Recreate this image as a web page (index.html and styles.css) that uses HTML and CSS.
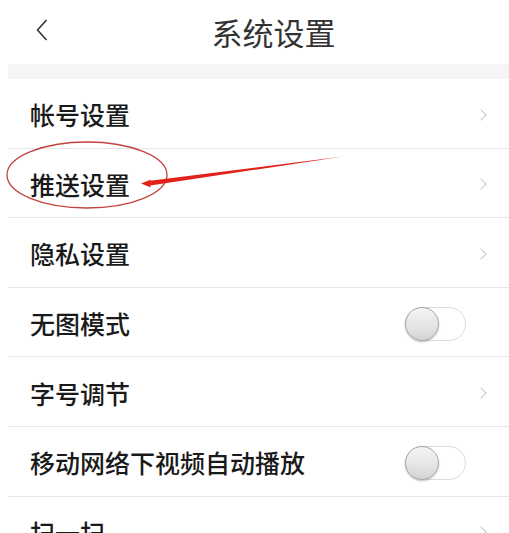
FILE: index.html
```html
<!DOCTYPE html>
<html lang="zh">
<head>
<meta charset="utf-8">
<link rel="stylesheet" href="styles.css">
</head>
<body>
<div class="page">
  <header class="topbar">
    <span class="back">
      <svg width="12" height="22" viewBox="0 0 12 22"><path d="M10.5 1 L1.5 11 L10.5 21" fill="none" stroke="#333" stroke-width="1.6" stroke-linejoin="round"/></svg>
    </span>
    <h1 class="title">系统设置</h1>
  </header>
  <div class="band"></div>
  <ul class="list">
    <li class="row"><span class="label">帐号设置</span><span class="chev"></span></li>
    <li class="row"><span class="label">推送设置</span><span class="chev"></span></li>
    <li class="row"><span class="label">隐私设置</span><span class="chev"></span></li>
    <li class="row"><span class="label">无图模式</span><span class="switch"><span class="knob"></span></span></li>
    <li class="row"><span class="label">字号调节</span><span class="chev"></span></li>
    <li class="row"><span class="label">移动网络下视频自动播放</span><span class="switch"><span class="knob"></span></span></li>
    <li class="row"><span class="label">扫一扫</span><span class="chev"></span></li>
  </ul>
  <svg class="annot" width="509" height="533" viewBox="0 0 509 533">
    <ellipse cx="87" cy="175" rx="80" ry="33" fill="none" stroke="#c4423c" stroke-width="1.3"/>
    <path d="M343 156.5 L148 181 L147 186 Z" fill="#e3211b"/>
    <path d="M141 183.5 L151 179.5 L149 183 L151 187.5 Z" fill="#e3211b"/>
  </svg>
</div>
</body>
</html>
```
FILE: styles.css
```css
* { box-sizing: border-box; }
html, body { margin: 0; padding: 0; background: #fff; }
body {
  font-family: "Noto Sans CJK SC", "Noto Sans", sans-serif;
  color: #222;
}
.page {
  position: relative;
  width: 509px;
  height: 533px;
  overflow: hidden;
  background: #fff;
}
.topbar {
  height: 64px;
  display: flex;
  align-items: center;
  justify-content: center;
  position: relative;
}
.back {
  position: absolute;
  left: 36px;
  top: 19px;
  display: flex;
}
.title {
  margin: 0 0 0 38px;
  font-size: 31px;
  font-weight: 400;
  color: #333;
  line-height: 1;
  padding-bottom: 2px;
}
.band {
  margin-left: 8px;
  height: 15px;
  background: #f5f5f5;
}
.list {
  list-style: none;
  margin: 0 0 0 8px;
  padding: 0;
}
.row {
  height: 69.6px;
  border-bottom: 1px solid #e6e6e6;
  display: flex;
  align-items: center;
  justify-content: space-between;
  padding: 3px 22px 0 22px;
}
.label {
  font-size: 25px;
  line-height: 1;
  font-weight: 500;
  color: #1a1a1a;
}
.chev {
  width: 8px;
  height: 8px;
  border-top: 1.2px solid #c9c9c9;
  border-right: 1.2px solid #c9c9c9;
  transform: rotate(45deg);
  margin-right: 2px;
}
.switch {
  width: 61px;
  height: 34px;
  border: 1px solid #dcdcdc;
  border-radius: 17px;
  margin-right: 21px;
  position: relative;
  background: #fff;
  display: flex;
  align-items: center;
}
.knob {
  width: 34px;
  height: 34px;
  margin-left: -1px;
  border-radius: 50%;
  border: 1px solid #a8a8a8;
  background: linear-gradient(180deg, #f4f4f4 0%, #e4e4e4 60%, #d2d2d2 100%);
  box-shadow: 0 1px 2px rgba(0,0,0,0.25);
}
.annot {
  position: absolute;
  left: 0;
  top: 0;
  pointer-events: none;
}
```
